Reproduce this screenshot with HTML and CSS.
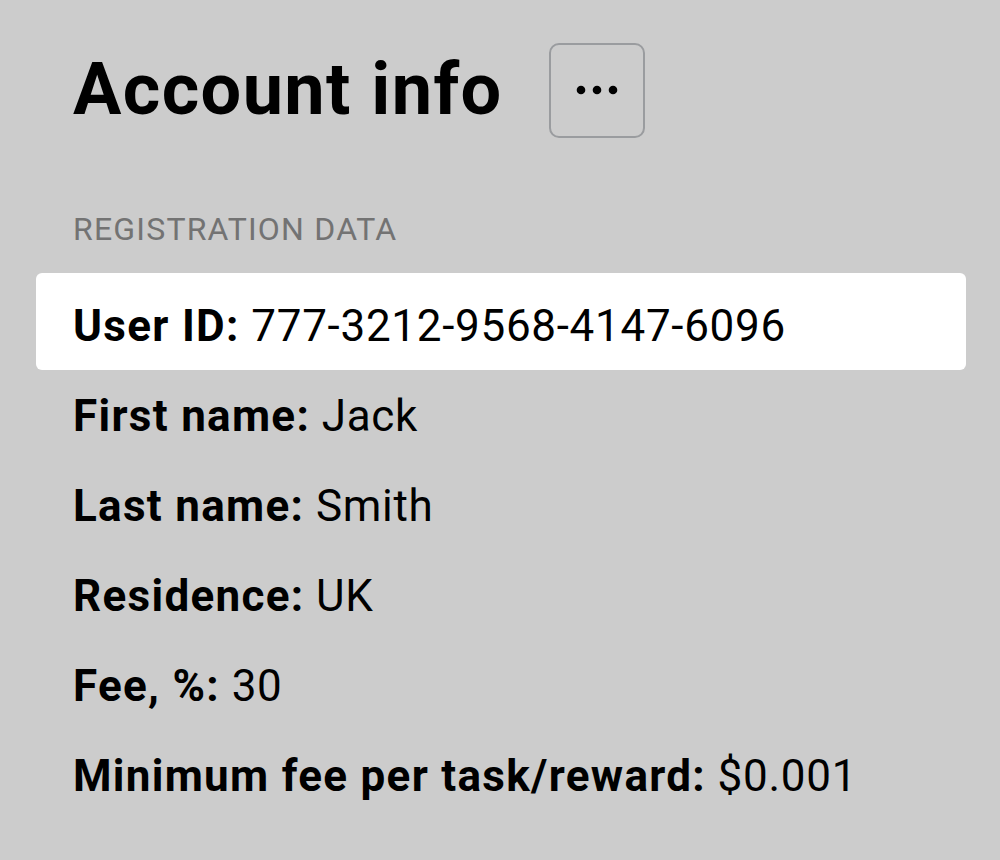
FILE: index.html
```html
<!DOCTYPE html>
<html lang="en">
<head>
<meta charset="utf-8">
<title>Account info</title>
<link rel="stylesheet" href="styles.css">
</head>
<body>
<main class="page">
  <header class="header">
    <h1 class="title">Account info</h1>
    <button class="more" type="button" aria-label="More">
      <svg width="42" height="10" viewBox="0 0 42 10"><circle cx="5" cy="5" r="4.3"/><circle cx="21" cy="5" r="4.3"/><circle cx="37" cy="5" r="4.3"/></svg>
    </button>
  </header>
  <h2 class="section">REGISTRATION DATA</h2>
  <ul class="list">
    <li class="row row-active"><b>User ID:</b> 777-3212-9568-4147-6096</li>
    <li class="row"><b>First name:</b> Jack</li>
    <li class="row"><b>Last name:</b> Smith</li>
    <li class="row"><b>Residence:</b> UK</li>
    <li class="row"><b>Fee, %:</b> 30</li>
    <li class="row"><b>Minimum fee per task/reward:</b> $0.001</li>
  </ul>
</main>
</body>
</html>
```
FILE: styles.css
```css
html, body {
  margin: 0;
  padding: 0;
  background: #cccccc;
}
body {
  font-family: Roboto, "Noto Sans", Arial, sans-serif;
  color: #000;
}
.page {
  width: 930px;
  padding: 40px 0 0 36px;
}
.header {
  display: flex;
  align-items: center;
  gap: 46px;
  padding-left: 37px;
  height: 100px;
}
.title {
  margin: 0;
  font-size: 72px;
  font-weight: 700;
  line-height: 100px;
  letter-spacing: 1.4px;
}
.more {
  width: 96px;
  height: 95px;
  border: 2px solid #9a9c9f;
  border-radius: 10px;
  background: transparent;
  display: flex;
  align-items: center;
  justify-content: center;
  padding: 0;
}
.more svg { fill: #000; }
.section {
  margin: 0;
  padding: 69px 0 0 37px;
  font-size: 32px;
  font-weight: 400;
  color: #737373;
  line-height: 40px;
  letter-spacing: 1.2px;
}
.list {
  list-style: none;
  margin: 0;
  padding: 0;
  margin-top: 24px;
}
.row {
  height: 90px;
  line-height: 92px;
  padding-left: 37px;
  font-size: 44px;
  letter-spacing: 0.7px;
}
.row b {
  font-weight: 700;
  letter-spacing: 1.3px;
}
.row-active {
  background: #fff;
  border-radius: 6px;
  height: 97px;
  line-height: 106px;
}
```
